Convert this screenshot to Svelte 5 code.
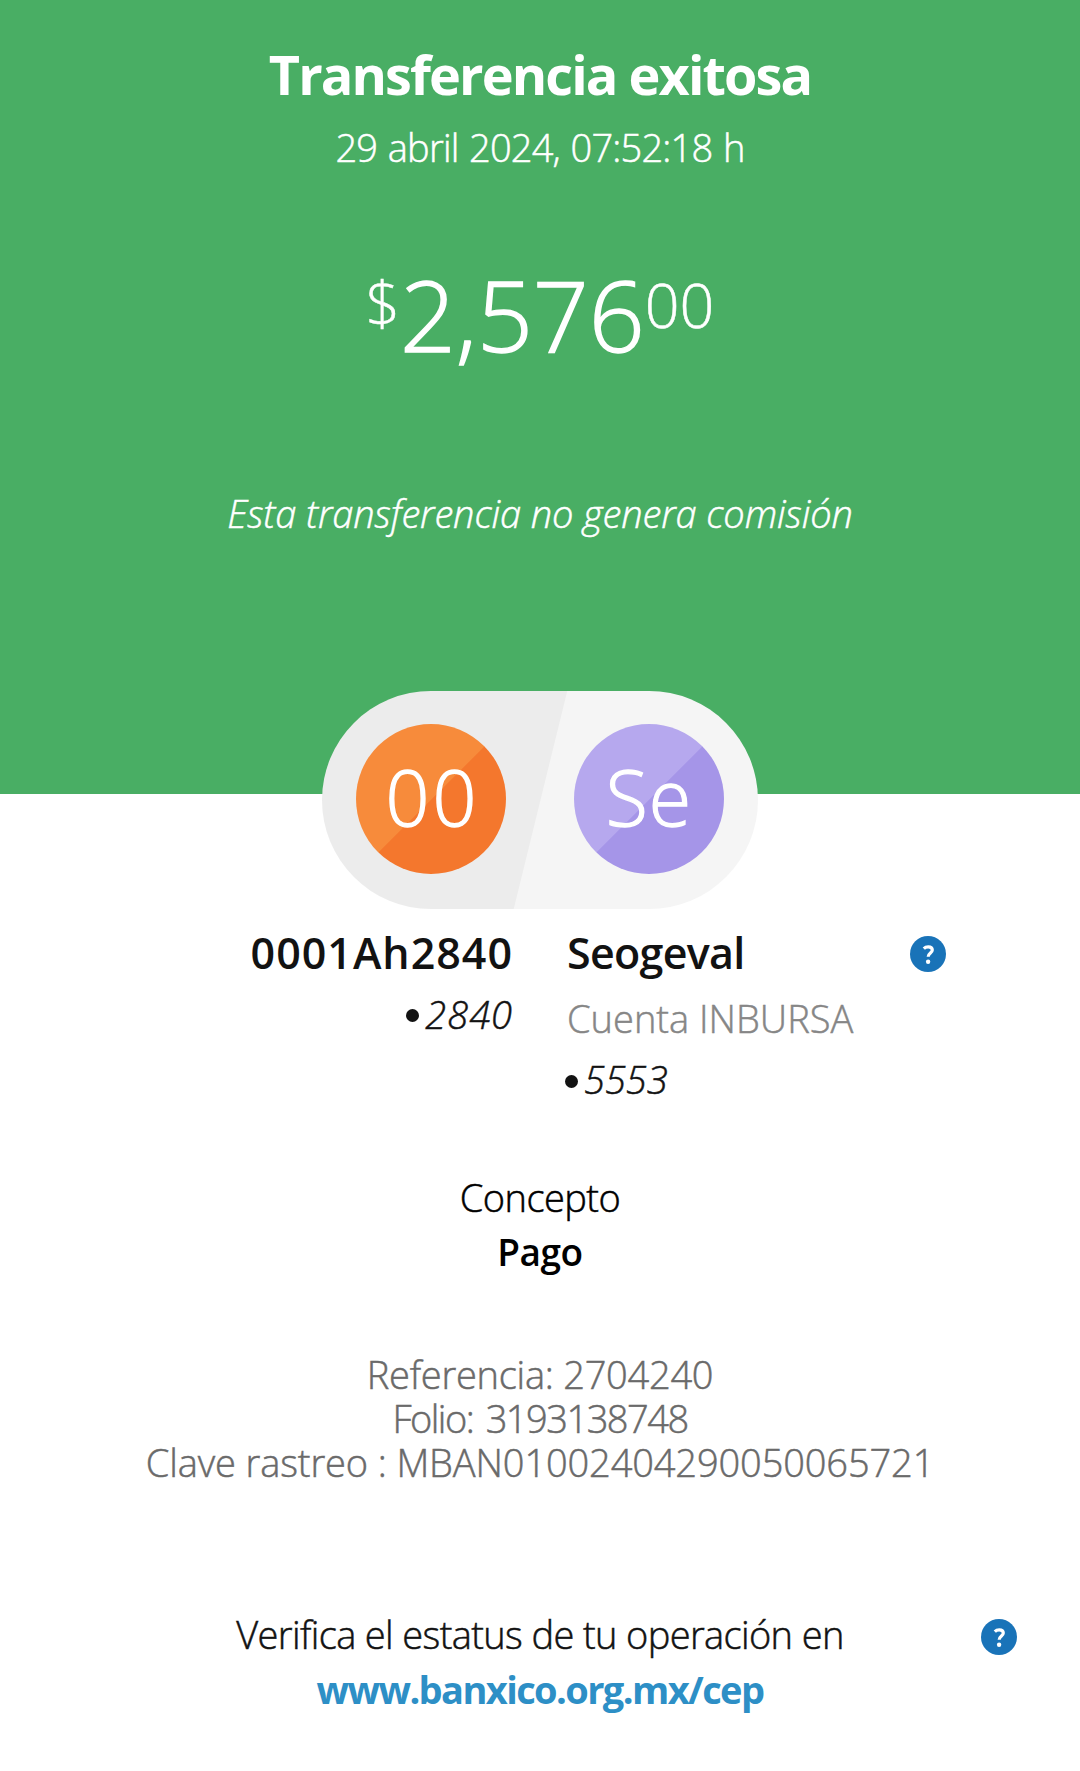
<script>
	const transfer = {
		date: '29 abril 2024, 07:52:18 h',
		amount: '2,576',
		cents: '00',
		reference: '2704240',
		folio: '3193138748',
		tracking: 'MBAN01002404290050065721'
	};
</script>

{#snippet help()}
	<svg class="help" viewBox="0 0 36 36" aria-label="Ayuda">
		<circle cx="18" cy="18" r="18" fill="#1973b8" />
		<path
			d="M13.8 12.6C15 11.4 16.5 10.9 18.2 10.9C20.8 10.9 22.3 12.1 22.3 14.1C22.3 17 18.3 17.2 18.2 20.8"
			fill="none"
			stroke="#fff"
			stroke-width="3.2"
		/>
		<circle cx="18.1" cy="25.8" r="2.2" fill="#fff" />
	</svg>
{/snippet}

<main class="receipt">
	<header>
		<h1>Transferencia exitosa</h1>
		<p class="date">{transfer.date}</p>
		<p class="amount">
			<span class="currency">$</span><span class="whole">{transfer.amount}</span><span class="cents"
				>{transfer.cents}</span
			>
		</p>
		<p class="fee">Esta transferencia no genera comisión</p>
	</header>

	<div class="pill">
		<div class="avatar orange">00</div>
		<div class="avatar purple">Se</div>
	</div>

	<section class="accounts">
		<div class="from">
			<h2>0001Ah2840</h2>
			<p class="number"><i class="dot"></i>2840</p>
		</div>
		<div class="to">
			<h2>Seogeval</h2>
			<p class="bank">Cuenta INBURSA</p>
			<p class="number"><i class="dot"></i>5553</p>
		</div>
		{@render help()}
	</section>

	<section class="concept">
		<p class="label">Concepto</p>
		<p class="value">Pago</p>
	</section>

	<section class="details">
		<p class="reference">Referencia: {transfer.reference}</p>
		<p class="folio">Folio: {transfer.folio}</p>
		<p class="tracking">Clave rastreo : {transfer.tracking}</p>
	</section>

	<footer>
		<p class="verify">Verifica el estatus de tu operación en</p>
		<p class="link">www.banxico.org.mx/cep</p>
		{@render help()}
	</footer>
</main>

<style>
	:global(body) {
		background: #fff;
	}

	.receipt {
		width: 1080px;
		height: 1771px;
		overflow: hidden;
		background: #fff;
		color: #121212;
		font-family: 'Open Sans', 'Noto Sans', sans-serif;
		font-size: 38px;
		font-weight: 300;
		line-height: 48px;
		text-align: center;
		/* the light cut is a touch too thin on its own */
		-webkit-text-stroke: 0.5px currentColor;
	}

	h1,
	h2,
	p {
		margin: 0;
		white-space: nowrap;
	}

	h1,
	h2,
	.value,
	.link {
		-webkit-text-stroke: 0;
	}

	header {
		box-sizing: border-box;
		height: 794px;
		padding-top: 42px;
		background: #49ae64;
		color: #fff;
	}

	h1 {
		font-size: 54px;
		font-weight: 700;
		line-height: 64px;
		letter-spacing: -1.9px;
	}

	.date {
		margin-top: 17px;
		letter-spacing: -0.8px;
		word-spacing: 1.5px;
	}

	.amount {
		display: flex;
		justify-content: center;
		margin-top: 88px;
		height: 111px;
		font-size: 98px;
		line-height: 110px;
	}

	.currency {
		font-size: 60px;
		line-height: 89px;
	}

	.whole {
		-webkit-text-stroke: 1.4px currentColor;
	}

	.cents {
		font-size: 61px;
		line-height: 91px;
	}

	.fee {
		margin-top: 119px;
		font-style: italic;
		letter-spacing: -0.1px;
	}

	.pill {
		display: flex;
		justify-content: space-between;
		align-items: center;
		box-sizing: border-box;
		width: 436px;
		height: 218px;
		margin: -103.5px auto 0;
		padding: 0 34px;
		border-radius: 109px;
		background: linear-gradient(103.8deg, #ececec 50%, #f5f5f5 50.2%);
	}

	.avatar {
		width: 150px;
		height: 150px;
		margin-top: -1px;
		border-radius: 50%;
		color: #fff;
		font-size: 77px;
		line-height: 146px;
		letter-spacing: 1px;
		-webkit-text-stroke: 1.3px currentColor;
	}

	.orange {
		background: linear-gradient(135deg, #f78b3b 50%, #f4772d 50.5%);
		letter-spacing: 3px;
		text-indent: 3px;
	}

	.purple {
		background: linear-gradient(135deg, #b6a8ee 50%, #a595e8 50.5%);
	}

	.accounts {
		display: grid;
		grid-template-columns: 513px 343px 36px;
		column-gap: 54px;
		margin-top: 18px;
	}

	.accounts .help {
		margin: 9.5px 0 0 -54px;
	}

	.help {
		width: 36px;
		height: 36px;
	}

	h2 {
		font-size: 43px;
		font-weight: 600;
		line-height: 52px;
	}

	.from {
		text-align: right;
	}

	.from h2 {
		letter-spacing: 1px;
	}

	.to {
		text-align: left;
	}

	.to h2 {
		letter-spacing: -0.7px;
	}

	.number {
		display: flex;
		align-items: center;
		font-style: italic;
	}

	.from .number {
		justify-content: flex-end;
		margin-top: 11px;
		letter-spacing: 1px;
	}

	.to .number {
		margin: 13px 0 0 -2px;
	}

	.dot {
		width: 13px;
		height: 13px;
		margin: 4px 6px 0 0;
		border-radius: 50%;
		background: #121212;
	}

	.bank {
		margin-top: 15.5px;
		color: #868686;
	}

	.concept {
		margin-top: 70px;
		color: #000;
	}

	.label {
		letter-spacing: -0.55px;
	}

	.value {
		margin-top: 7px;
		font-size: 37px;
		font-weight: 600;
		letter-spacing: -0.5px;
	}

	.details {
		margin-top: 76px;
		color: #6a6a6a;
		line-height: 44px;
	}

	.reference {
		letter-spacing: -0.25px;
	}

	.folio {
		letter-spacing: -1.5px;
		word-spacing: 4px;
	}

	.tracking {
		letter-spacing: -0.12px;
	}

	footer {
		position: relative;
		margin-top: 126px;
	}

	.verify {
		letter-spacing: -0.63px;
	}

	.link {
		margin-top: 7px;
		color: #2d8fc6;
		font-weight: 700;
		letter-spacing: -1.6px;
	}

	footer .help {
		position: absolute;
		top: 8.5px;
		right: 63.5px;
	}
</style>
